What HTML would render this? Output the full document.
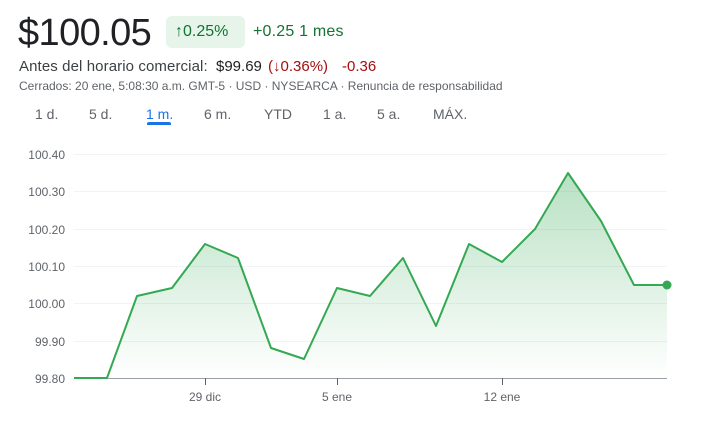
<!DOCTYPE html>
<html><head><meta charset="utf-8"><style>
body{margin:0;width:704px;height:423px;background:#fff;font-family:"Liberation Sans",Arial,sans-serif;position:relative;overflow:hidden}
.a{position:absolute;white-space:nowrap}
</style></head><body>
<div class="a" style="left:18px;top:12px;font-size:38px;color:#202124;letter-spacing:-0.6px">$100.05</div>
<div class="a" style="left:166px;top:16px;width:79px;height:32px;background:#e6f4ea;border-radius:6px"></div>
<div class="a" style="left:175px;top:23px;font-size:16px;color:#137333">↑0.25%</div>
<div class="a" style="left:253px;top:23px;font-size:16px;color:#137333;letter-spacing:0.2px">+0.25 1 mes</div>
<div class="a" style="left:19px;top:58px;font-size:15px;color:#3c4043;letter-spacing:0.1px">Antes del horario comercial:</div>
<div class="a" style="left:216px;top:58px;font-size:15px;color:#202124">$99.69</div>
<div class="a" style="left:268px;top:58px;font-size:15px;color:#a50e0e">(↓0.36%)</div>
<div class="a" style="left:342px;top:58px;font-size:15px;color:#a50e0e">-0.36</div>
<div class="a" style="left:19px;top:79px;font-size:12px;color:#5f6368">Cerrados: 20 ene, 5:08:30 a.m. GMT-5 · USD · NYSEARCA · Renuncia de responsabilidad</div>
<div class="a" style="top:106px;font-size:14px;color:#5f6368;left:0;width:704px">
<span class="a" style="left:35px">1 d.</span><span class="a" style="left:89px">5 d.</span><span class="a" style="left:146px;color:#1a73e8">1 m.</span><span class="a" style="left:204px">6 m.</span><span class="a" style="left:264px">YTD</span><span class="a" style="left:323px">1 a.</span><span class="a" style="left:377px">5 a.</span><span class="a" style="left:433px">MÁX.</span></div>
<div class="a" style="left:147px;top:122px;width:24px;height:3px;background:#1a73e8;border-radius:2px 2px 0 0"></div>
<svg class="a" style="left:0;top:0" width="704" height="423">
<defs><linearGradient id="g" x1="0" y1="0" x2="0" y2="1"><stop offset="0" stop-color="#34a853" stop-opacity=".35"/><stop offset="1" stop-color="#34a853" stop-opacity="0"/></linearGradient></defs>
<g stroke="#f1f3f4" stroke-width="1"><line x1="74" x2="667" y1="154.5" y2="154.5"/><line x1="74" x2="667" y1="191.5" y2="191.5"/><line x1="74" x2="667" y1="229.5" y2="229.5"/><line x1="74" x2="667" y1="266.5" y2="266.5"/><line x1="74" x2="667" y1="303.5" y2="303.5"/><line x1="74" x2="667" y1="341.5" y2="341.5"/></g>
<g font-size="12" fill="#5f6368" text-anchor="end"><text x="65" y="159">100.40</text><text x="65" y="196">100.30</text><text x="65" y="234">100.20</text><text x="65" y="271">100.10</text><text x="65" y="308">100.00</text><text x="65" y="346">99.90</text><text x="65" y="383">99.80</text></g>
<path d="M74,378 L107,378 L137,296 L172,288 L205,244 L238,258 L271,348 L304,359 L337,288 L370,296 L403,258 L436,326 L469,244 L502,262 L535,229 L568,173 L601,221 L634,285 L667,285 L667,378 Z" fill="url(#g)"/>
<line x1="74" x2="667" y1="378.5" y2="378.5" stroke="#9aa0a6"/>
<g stroke="#5f6368"><line x1="205.5" x2="205.5" y1="378" y2="385"/><line x1="337.5" x2="337.5" y1="378" y2="385"/><line x1="502.5" x2="502.5" y1="378" y2="385"/></g>
<path d="M74,378 L107,378 L137,296 L172,288 L205,244 L238,258 L271,348 L304,359 L337,288 L370,296 L403,258 L436,326 L469,244 L502,262 L535,229 L568,173 L601,221 L634,285 L667,285" fill="none" stroke="#34a853" stroke-width="2" stroke-linejoin="round"/>
<circle cx="667" cy="285" r="4.5" fill="#34a853"/>
<g font-size="12" fill="#5f6368" text-anchor="middle"><text x="205" y="401">29 dic</text><text x="337" y="401">5 ene</text><text x="502" y="401">12 ene</text></g>
</svg>
</body></html>
